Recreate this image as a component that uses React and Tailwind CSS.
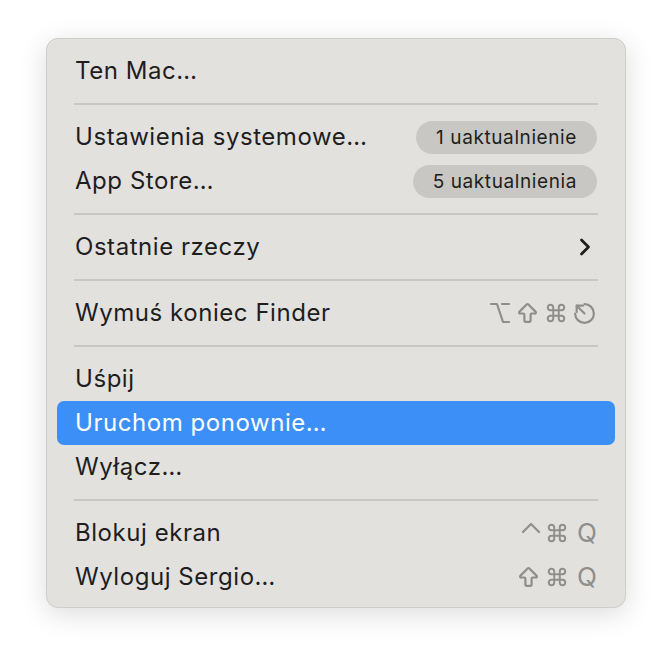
import React from 'react';
import { Command, ArrowBigUp, Option } from 'lucide-react';

const KEY = '#8f8e8c';

function EscKey() {
  return (
    <svg width="25" height="25" viewBox="0 0 24 24" fill="none" stroke={KEY} strokeWidth="2.1" strokeLinecap="round" strokeLinejoin="round">
      <path d="M12 3 A9 9 0 1 1 3 12" />
      <path d="M12 12 L4.5 4.5" />
      <path d="M4.5 4.5 h6 M4.5 4.5 v6" />
    </svg>
  );
}

function Caret() {
  return (
    <svg width="20" height="12" viewBox="0 0 20 12" fill="none" stroke={KEY} strokeWidth="2.2" strokeLinecap="round" strokeLinejoin="round" className="-mt-[10px]">
      <path d="M2 10 L10 2 L18 10" />
    </svg>
  );
}

function Chevron() {
  return (
    <svg width="12" height="18" viewBox="0 0 12 18" fill="none" stroke="#1e1e1e" strokeWidth="2.8" strokeLinecap="round" strokeLinejoin="round" className="mr-[6px]">
      <path d="M2.5 2 L9.5 9 L2.5 16" />
    </svg>
  );
}

function Separator() {
  return (
    <div className="h-[22px] flex items-center px-[27px]">
      <div className="h-[2px] w-full bg-[#c9c7c4]" />
    </div>
  );
}

function Badge({ children }) {
  return (
    <span className="h-[33px] px-[20px] rounded-full bg-[#c9c7c4] text-[19px] tracking-[0.6px] text-[#1e1e1e] flex items-center leading-none">
      {children}
    </span>
  );
}

function Row({ label, right, active }) {
  return (
    <div
      className={
        'h-[44px] mx-[10px] pl-[18px] pr-[18px] rounded-[7px] flex items-center justify-between ' +
        (active ? 'bg-[#3d8ff8] text-white' : 'text-[#1e1e1e]')
      }
    >
      <span className="text-[24px] tracking-[0.55px] leading-none">{label}</span>
      {right}
    </div>
  );
}

const shortcut = (...items) => (
  <div className="flex items-center gap-[5px] text-[#8f8e8c]">{items}</div>
);

const Q = <span key="q" className="text-[26px] leading-none ml-[4px]">Q</span>;

export default function App() {
  return (
    <div className="w-[672px] h-[662px] bg-white flex justify-center pt-[38px]" style={{ fontFamily: 'Inter, "Noto Sans", sans-serif' }}>
      <div className="w-[580px] h-[570px] bg-[#e3e1de] rounded-[12px] border border-[#cfcdca] shadow-[0_6px_28px_rgba(0,0,0,0.14)] pt-[10px] pb-[9px]">
        <Row label="Ten Mac…" />
        <Separator />
        <Row label="Ustawienia systemowe…" right={<Badge>1 uaktualnienie</Badge>} />
        <Row label="App Store…" right={<Badge>5 uaktualnienia</Badge>} />
        <Separator />
        <Row label="Ostatnie rzeczy" right={<Chevron />} />
        <Separator />
        <Row
          label="Wymuś koniec Finder"
          right={shortcut(
            <Option key="o" size={24} strokeWidth={2.2} />,
            <ArrowBigUp key="s" size={25} strokeWidth={2.1} className="-ml-[2px]" />,
            <Command key="c" size={22} strokeWidth={2.1} />,
            <EscKey key="e" />
          )}
        />
        <Separator />
        <Row label="Uśpij" />
        <Row label="Uruchom ponownie…" active />
        <Row label="Wyłącz…" />
        <Separator />
        <Row
          label="Blokuj ekran"
          right={shortcut(
            <Caret key="u" />,
            <Command key="c" size={22} strokeWidth={2.1} />,
            Q
          )}
        />
        <Row
          label="Wyloguj Sergio…"
          right={shortcut(
            <ArrowBigUp key="s" size={25} strokeWidth={2.1} />,
            <Command key="c" size={22} strokeWidth={2.1} />,
            Q
          )}
        />
      </div>
    </div>
  );
}
